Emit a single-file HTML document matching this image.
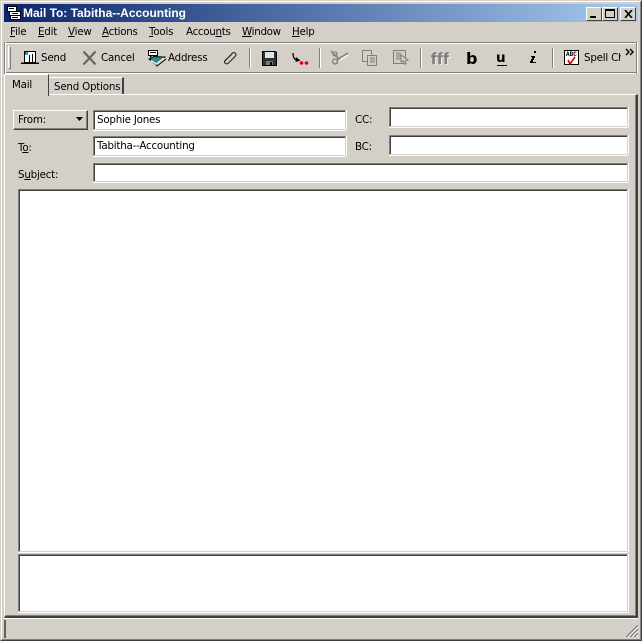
<!DOCTYPE html>
<html><head><meta charset="utf-8"><style>
html,body{margin:0;padding:0}
body{width:642px;height:641px;overflow:hidden;background:#d4d0c8;position:relative;font:11px "DejaVu Sans","Liberation Sans",sans-serif;color:#000}
div,span,svg{position:absolute;box-sizing:border-box}
.t{white-space:nowrap;line-height:13px;font-size:10.3px;letter-spacing:-.22px}
.t u{text-decoration:underline;position:static}
.f{background:#fff;border-top:1px solid #808080;border-left:1px solid #808080;border-bottom:1px solid #d4d0c8;border-right:1px solid #d4d0c8;box-shadow:inset 1px 1px 0 #404040,0 1px 0 #fff,1px 0 0 #fff}
.sep{width:2px;top:48px;height:20px;background:linear-gradient(90deg,#808080 50%,#fff 50%)}
</style></head><body>
<div style="left:0;top:0;width:642px;height:641px;border:1px solid;border-color:#d4d0c8 #404040 #404040 #d4d0c8"></div>
<div style="left:1px;top:1px;width:640px;height:639px;border:1px solid;border-color:#fff #808080 #808080 #fff"></div>
<div style="left:4px;top:4px;width:634px;height:18px;background:linear-gradient(90deg,#0a246a,#a6caf0)"></div>
<svg style="left:6px;top:5px" width="16" height="16" shape-rendering="crispEdges"><path d="M1.500 1.500h9v5h-9zM3.500 6.500h11v4h-11zM4.500 10.500h10v4h-10z" fill="#fff" stroke="#000"/><path d="M3 3.500h5M6 8.500h6M6 12.500h6" stroke="#000"/></svg>
<div class="t" style="left:23px;top:7px;color:#fff;font-weight:bold;font-family:'Liberation Sans',sans-serif;font-size:12px;letter-spacing:-.02px">Mail To: Tabitha--Accounting</div>
<div style="left:586px;top:7px;width:16px;height:14px;background:#d4d0c8;border:1px solid;border-color:#fff #404040 #404040 #fff"><div style="left:3px;top:8px;width:6px;height:2px;background:#000"></div></div>
<div style="left:602px;top:7px;width:16px;height:14px;background:#d4d0c8;border:1px solid;border-color:#fff #404040 #404040 #fff"><div style="left:2px;top:1px;width:10px;height:9px;border:1px solid #000;border-top-width:2px"></div></div>
<div style="left:620px;top:7px;width:16px;height:14px;background:#d4d0c8;border:1px solid;border-color:#fff #404040 #404040 #fff"><svg style="left:3px;top:2px" width="9" height="8"><path d="M1 0L8 8M8 0L1 8" stroke="#000" stroke-width="1.600"/></svg></div>

<div class="t" style="left:10px;top:26px"><u>F</u>ile</div>
<div class="t" style="left:38px;top:26px"><u>E</u>dit</div>
<div class="t" style="left:68px;top:26px"><u>V</u>iew</div>
<div class="t" style="left:102px;top:26px;letter-spacing:-.3px"><u>A</u>ctions</div>
<div class="t" style="left:149px;top:26px"><u>T</u>ools</div>
<div class="t" style="left:186px;top:26px;letter-spacing:-.3px">Accou<u>n</u>ts</div>
<div class="t" style="left:242px;top:26px;letter-spacing:-.3px"><u>W</u>indow</div>
<div class="t" style="left:292px;top:26px"><u>H</u>elp</div>

<div style="left:4px;top:42px;width:634px;height:2px;background:linear-gradient(#808080 50%,#fff 50%)"></div>
<div style="left:4px;top:72px;width:634px;height:2px;background:linear-gradient(#808080 50%,#fff 50%)"></div>
<div style="left:4px;top:42px;width:2px;height:32px;background:linear-gradient(90deg,#808080 50%,#fff 50%)"></div>
<div style="left:636px;top:42px;width:2px;height:32px;background:linear-gradient(90deg,#808080 50%,#fff 50%)"></div>
<div style="left:8px;top:46px;width:3px;height:23px;border:1px solid;border-color:#fff #808080 #808080 #fff"></div>

<svg style="left:21px;top:49px" width="18" height="16" shape-rendering="crispEdges"><path d="M3.500 2.500h11v11h-11z" fill="#fff" stroke="#000"/><path d="M4 3h3v3H4z" fill="#1090d8"/><path d="M8.500 6v8M11.500 5v9" stroke="#000"/><path d="M0 14h18v1H0z" fill="#000"/><path d="M0 13.500h3M15 13.500h3" stroke="#777"/></svg>
<div class="t" style="left:41px;top:52px">Send</div>
<svg style="left:82px;top:50px" width="15" height="16"><path d="M1.500 1.500L13.500 14.500M13.500 1.500L1.500 14.500" stroke="#666" stroke-width="2.200"/></svg>
<div class="t" style="left:101px;top:52px">Cancel</div>
<svg style="left:146px;top:49px" width="21" height="19"><path d="M2.500 1.500h9v5h-6l-1 2v-2h-2z" fill="#fff" stroke="#000" shape-rendering="crispEdges"/><path d="M4 3.500h6" stroke="#000" shape-rendering="crispEdges"/><path d="M3 10L8 7.500L19 8L11 15z" fill="#1f8f88" stroke="#000" stroke-width=".9"/><path d="M3 10L10 15.500L11 17L20 10" fill="none" stroke="#000" stroke-width="1"/><path d="M5 11.500L10.500 15L18 9" fill="none" stroke="#f2eed8" stroke-width="1.500"/></svg>
<div class="t" style="left:168px;top:52px">Address</div>
<svg style="left:222px;top:50px" width="17" height="16"><path d="M3 11L10 3.500C12 1.500 15 3.500 13.500 6L6.500 13C4.500 15 1.500 13 3 10.500L9.500 4.500" fill="none" stroke="#333" stroke-width="1.200"/></svg>
<div class="sep" style="left:249px"></div>
<svg style="left:262px;top:51px" width="15" height="15" shape-rendering="crispEdges"><path d="M.5.5h13l1 1v13H.5z" fill="#333" stroke="#000"/><path d="M3 1h9v6H3z" fill="#d8e8e4"/><path d="M4 10h7v4H4z" fill="#777"/><path d="M8 11h2v3H8z" fill="#000"/></svg>
<svg style="left:291px;top:52px" width="19" height="14"><path d="M2 1C2 6 4 8 7 8" fill="none" stroke="#000" stroke-width="1.300"/><path d="M5 5L9.500 8.500L4.500 10z" fill="#000"/><circle cx="10.500" cy="11" r="1.800" fill="#d00"/><circle cx="15.500" cy="11" r="1.800" fill="#d00"/></svg>
<div class="sep" style="left:319px"></div>
<svg style="left:330px;top:50px" width="19" height="16"><path d="M1 1L10 10M18 3L6 10" stroke="#808080" stroke-width="1.500"/><path d="M5 9a2.500 2.500 0 1 0 .1 0M5 2a2 2 0 1 0 .1 0" fill="none" stroke="#808080" stroke-width="1.300"/><path d="M9 11L18 5" stroke="#fff"/></svg>
<svg style="left:362px;top:50px" width="16" height="17" shape-rendering="crispEdges"><path d="M.5.5h9v11h-9z" fill="#d4d0c8" stroke="#808080"/><path d="M5.500 5.500h9v10h-9z" fill="#d4d0c8" stroke="#808080"/><path d="M8 8h5M8 10h5M8 12h5" stroke="#808080"/></svg>
<svg style="left:393px;top:50px" width="16" height="16" shape-rendering="crispEdges"><path d="M.5.5h12v13H.5z" fill="#d4d0c8" stroke="#808080"/><path d="M3 3h5M3 5h6M3 7h5M3 9h6" stroke="#808080"/><path d="M8 5l7 5-3 1 1 3-2 0-1-3-2 1z" fill="#d4d0c8" stroke="#808080"/></svg>
<div class="sep" style="left:420px"></div>
<div class="t" style="left:431px;top:51px;font:bold 16px 'Liberation Sans',sans-serif;color:#808080;letter-spacing:.8px;-webkit-text-stroke:.5px #808080;text-shadow:1px 1px 0 #fff">fff</div>
<div class="t" style="left:466px;top:49px;font:bold 16px 'DejaVu Sans',sans-serif;letter-spacing:0">b</div>
<div class="t" style="left:496px;top:50px;font:bold 13.500px 'DejaVu Sans',sans-serif;letter-spacing:0">u</div>
<div style="left:497px;top:65px;width:10px;height:1px;background:#000"></div>
<svg style="left:528px;top:50px" width="10" height="15" shape-rendering="crispEdges"><path d="M6 1h2v2H6zM3 6h4v2H6v2H5v2h3v1H2v-2h1v-2h1V7H3z" fill="#000"/></svg>
<div class="sep" style="left:552px"></div>
<svg style="left:564px;top:50px" width="16" height="16" shape-rendering="crispEdges"><path d="M.5.500h14v14H.5z" fill="#fff" stroke="#000"/></svg>
<div class="t" style="left:566px;top:51px;font:bold 6px 'Liberation Mono',monospace;letter-spacing:0">ABC</div>
<svg style="left:566px;top:56px" width="12" height="9"><path d="M2 4L4 8L9 1" fill="none" stroke="#d00" stroke-width="1.600"/></svg>
<div class="t" style="left:584px;top:52px;width:37px;overflow:hidden">Spell Check</div>
<svg style="left:625px;top:48px" width="11" height="8"><path d="M1 1L4 4L1 7M5 1L8 4L5 7" fill="none" stroke="#000" stroke-width="1.400"/></svg>

<!-- tab panel -->
<div style="left:4px;top:94px;width:634px;height:524px;border-top:1px solid #fff;border-left:1px solid #fff;border-bottom:2px solid #404040;border-right:2px solid #404040;box-shadow:inset -1px -1px 0 #808080"></div>
<div style="left:4px;top:74px;width:45px;height:22px;background:#d4d0c8;border-top:1px solid #fff;border-left:1px solid #fff;border-right:1px solid #404040"></div>
<div class="t" style="left:12px;top:79px">Mail</div>
<div style="left:49px;top:77px;width:75px;height:17px;background:#d4d0c8;border-top:1px solid #fff;border-right:2px solid #404040"></div>
<div class="t" style="left:54px;top:81px">Send Options</div>

<div style="left:13px;top:110px;width:75px;height:20px;background:#d4d0c8;border:1px solid;border-color:#fff #404040 #404040 #fff;box-shadow:inset -1px -1px 0 #808080"></div>
<div class="t" style="left:18px;top:114px">From:</div>
<svg style="left:75px;top:117px" width="9" height="5"><path d="M1 0h7L4.500 4z" fill="#000"/></svg>
<div class="f" style="left:93px;top:110px;width:253px;height:20px"></div>
<div class="t" style="left:97px;top:114px">Sophie Jones</div>
<div class="t" style="left:18px;top:142px">T<u>o</u>:</div>
<div class="f" style="left:93px;top:136px;width:253px;height:20px"></div>
<div class="t" style="left:97px;top:140px">Tabitha--Accounting</div>
<div class="t" style="left:18px;top:169px">S<u>u</u>bject:</div>
<div class="f" style="left:93px;top:163px;width:535px;height:19px"></div>
<div class="t" style="left:355px;top:114px">CC:</div>
<div class="f" style="left:389px;top:107px;width:239px;height:20px"></div>
<div class="t" style="left:355px;top:141px">BC:</div>
<div class="f" style="left:389px;top:135px;width:239px;height:20px"></div>
<div class="f" style="left:18px;top:189px;width:610px;height:363px"></div>
<div class="f" style="left:18px;top:554px;width:610px;height:58px"></div>

<!-- status -->
<div style="left:4px;top:618px;width:634px;height:1px;background:#fff"></div>
<div style="left:4px;top:620px;width:2px;height:18px;background:#606060"></div>
<svg style="left:626px;top:625px" width="12" height="12"><path d="M0 12L12 0M1 12L12 1M4 12L12 4M5 12L12 5M8 12L12 8M9 12L12 9" stroke="#808080"/><path d="M2 12L12 2M6 12L12 6M10 12L12 10" stroke="#fff"/></svg>
</body></html>
